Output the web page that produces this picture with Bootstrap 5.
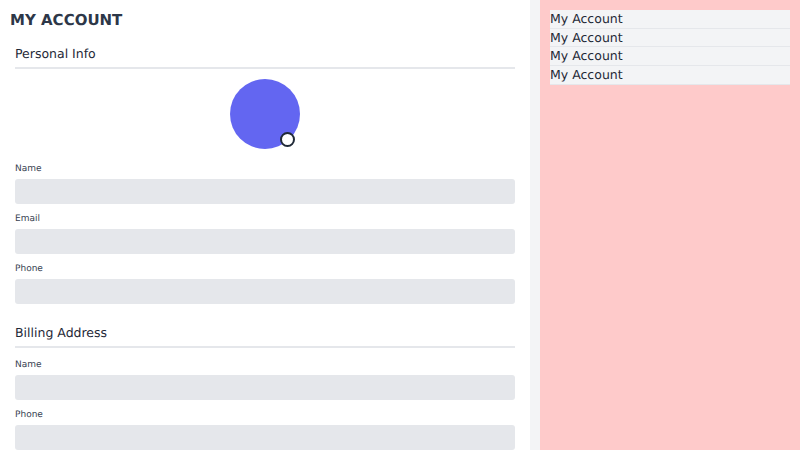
<!DOCTYPE html>
<html lang="en">
<head>
<meta charset="utf-8">
<title>My Account</title>
<link href="https://cdn.jsdelivr.net/npm/bootstrap@5.3.0/dist/css/bootstrap.min.css" rel="stylesheet">
<style>
html, body { height: 450px; overflow: hidden; }
body { font-family: "DejaVu Sans", sans-serif; background: #f3f4f6; color: #1f2937; text-rendering: geometricPrecision; }
.shell { height: 450px; }
.main-pane { width: 530px; background: #fff; padding: 10px 15px 0 10px; flex: none; }
.side-pane { width: 260px; margin-left: 10px; background: #fecaca; padding: 10px; flex: none; }
.page-title { font-size: 15px; line-height: 20px; font-weight: 700; color: #2d3748; margin: 0; }
.section-box { padding-left: 5px; }
.section-title { font-size: 12.5px; line-height: 20px; font-weight: 400; color: #1f2937; margin: 0; padding-bottom: 3px; border-bottom: 2px solid #e5e7eb; }
.first-sec { margin-top: 14px; }
.next-sec { margin-top: 19px; }
.avatar-wrap { padding: 10px 0 11px; }
.avatar-disc { width: 70px; height: 70px; border-radius: 50%; background: #6366f1; }
.avatar-dot { width: 15px; height: 15px; border-radius: 50%; background: #fff; border: 2px solid #1f2937; position: absolute; right: 5px; bottom: 2.5px; }
.field-lbl { font-size: 9px; line-height: 15px; color: #374151; margin: 0; padding: 2px 0; display: block; }
.field-box { height: 25px; background: #e5e7eb; border: 0; border-radius: 3px; margin-bottom: 6px; width: 100%; display: block; }
.side-list { background: #f3f4f6; }
.side-row { font-size: 12.5px; line-height: 17.7px; color: #1f2937; background: #f3f4f6; border-bottom: 1px solid #e5e7eb; }
</style>
</head>
<body>
<div class="shell d-flex">
  <main class="main-pane">
    <h1 class="page-title">MY ACCOUNT</h1>
    <section class="section-box first-sec">
      <h2 class="section-title">Personal Info</h2>
      <div class="avatar-wrap d-flex justify-content-center">
        <div class="avatar-disc position-relative"><span class="avatar-dot"></span></div>
      </div>
      <label class="field-lbl">Name</label>
      <input class="field-box" type="text" aria-label="Name">
      <label class="field-lbl">Email</label>
      <input class="field-box" type="text" aria-label="Email">
      <label class="field-lbl">Phone</label>
      <input class="field-box" type="text" aria-label="Phone">
    </section>
    <section class="section-box next-sec">
      <h2 class="section-title mb-2">Billing Address</h2>
      <label class="field-lbl">Name</label>
      <input class="field-box" type="text" aria-label="Name">
      <label class="field-lbl">Phone</label>
      <input class="field-box" type="text" aria-label="Phone">
    </section>
  </main>
  <aside class="side-pane">
    <div class="side-list">
      <div class="side-row">My Account</div>
      <div class="side-row">My Account</div>
      <div class="side-row">My Account</div>
      <div class="side-row">My Account</div>
    </div>
  </aside>
</div>
<script src="https://cdn.jsdelivr.net/npm/bootstrap@5.3.0/dist/js/bootstrap.bundle.min.js"></script>
</body>
</html>
